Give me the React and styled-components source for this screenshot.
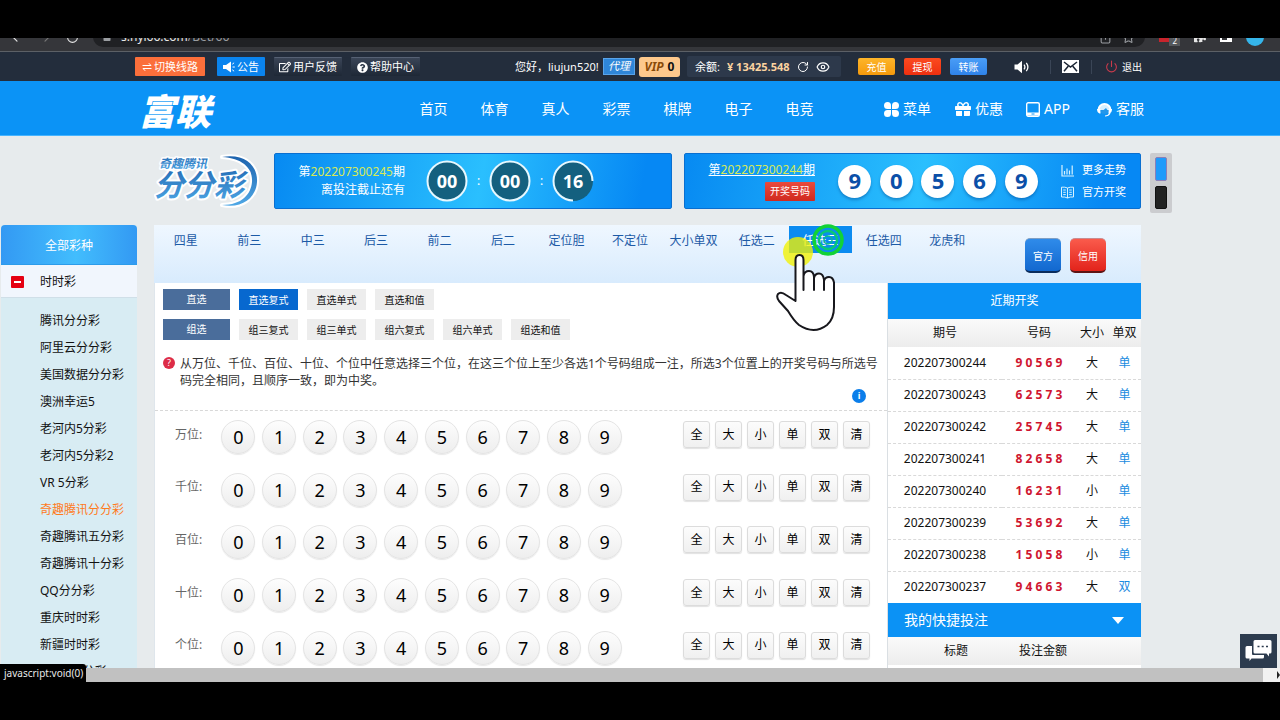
import React, { useState } from 'react'
import styled, { createGlobalStyle } from 'styled-components'
import { FaRegEdit, FaQuestionCircle, FaGift, FaLock, FaPuzzlePiece } from 'react-icons/fa'
import { ArrowLeft, ArrowRight, RotateCw, Eye, Power, Star, Share } from 'lucide-react'

const GlobalStyle = createGlobalStyle`
  * { box-sizing: border-box; }
  body {
    margin: 0;
    background: #000;
    font-family: "Noto Sans", "Noto Sans CJK SC", sans-serif;
    font-size: 12px;
    line-height: 18px;
    color: #111;
  }
  button { font-family: inherit; padding: 0; border: 0; cursor: pointer; }
  a { color: inherit; text-decoration: none; }
  ul { list-style: none; margin: 0; padding: 0; }
  svg { display: block; flex-shrink: 0; }
`;

const Screen = styled.div`
  height: 100vh;
  padding: 38px 0;
  background: #000;
  display: flex;
  flex-direction: column;
  overflow: hidden;
`;

/* browser strip */
const BrowserStrip = styled.div`
  height: 14px;
  flex-shrink: 0;
  display: flex;
  align-items: flex-end;
  overflow: hidden;
  background: #35363a;
  border-bottom: 1px solid #5c6066;
`;

const BrowserBar = styled.div`
  flex: 1;
  height: 28px;
  display: flex;
  align-items: center;
  gap: 14px;
  padding: 0 16px 0 10px;
  color: #e6e6e6;
`;

const Address = styled.div`
  flex: 1;
  height: 20px;
  border-radius: 10px;
  background: #202124;
  display: flex;
  align-items: center;
  gap: 10px;
  padding: 0 10px;
  color: #9a9da1;

  span { flex: 1; }
  b { font-weight: 400; color: #e8e8e8; }
`;

const Extension = styled.div`
  display: flex;
  align-items: center;
`;

const ExtensionBlock = styled.span`
  width: 10px;
  height: 10px;
  background: #c8242c;
`;

const ExtensionCount = styled.span`
  align-self: flex-end;
  margin-top: 8px;
  background: #55585c;
  color: #fff;
  font-size: 8px;
  line-height: 10px;
  padding: 0 3px;
`;

const PanelToggle = styled.span`
  width: 12px;
  height: 10px;
  border: 2px solid #fff;
  border-right-width: 5px;
`;

const Avatar = styled.div`
  width: 18px;
  height: 18px;
  border-radius: 50%;
  background: #35b5ea;
`;

/* account bar */
const AccountBar = styled.div`
  height: 29px;
  flex-shrink: 0;
  display: flex;
  align-items: center;
  gap: 9px;
  padding: 0 138px 0 135px;
  background: #232d3c;
  color: #fff;
  font-size: 11px;
  white-space: nowrap;
`;

const TopButton = styled.button`
  height: 19px;
  width: ${p => p.$w}px;
  display: flex;
  align-items: center;
  justify-content: center;
  gap: 2px;
  border-radius: 1px;
  font-size: 11px;
  line-height: 18px;
  color: #fff;
  background: ${p => p.$bg || 'linear-gradient(#3a4557, #1e2836)'};
  border-top: ${p => p.$bg ? '0' : '1px solid #566174'};
  margin-right: ${p => p.$space || 0}px;
`;

const AccountGroup = styled.div`
  margin-left: auto;
  display: flex;
  align-items: center;
`;

const Greeting = styled.span`
  width: 88px;
`;

const AgentBadge = styled.span`
  width: 32px;
  height: 17px;
  line-height: 14px;
  text-align: center;
  font-style: italic;
  background: #2f86d8;
  border: 1px solid #5aa4ea;
`;

const VipBadge = styled.span`
  width: 41px;
  height: 20px;
  margin: 0 7px 0 4px;
  display: flex;
  align-items: center;
  justify-content: center;
  gap: 4px;
  border-radius: 3px;
  background: #fdc88c;
  font-size: 12px;
  font-weight: 700;
  color: #111;

  i { color: #8a4a08; }
`;

const Balance = styled.div`
  width: 154px;
  height: 21px;
  padding: 0 8px;
  display: flex;
  align-items: center;
  gap: 7px;
  border-radius: 2px;
  background: #2d394b;
  margin-right: 17px;

  b { color: #fbd3a0; }
`;

const CashGroup = styled.div`
  display: flex;
  gap: 9px;
  margin-right: 16px;
`;

const CashButton = styled.button`
  width: 37px;
  height: 17px;
  border-radius: 2px;
  background: ${p => p.$bg};
  color: #fff;
  font-size: 10px;
  line-height: 16px;
`;

const IconCell = styled.button`
  height: 14px;
  display: flex;
  align-items: center;
  padding: 0 ${p => p.$end}px 0 11px;
  background: none;
  border-right: 1px solid #3a4556;
  color: #fff;
`;

const Logout = styled.a`
  display: flex;
  align-items: center;
  gap: 4px;
  padding-left: 13px;
  font-size: 10px;
`;

/* main nav */
const NavBar = styled.nav`
  height: 55px;
  flex-shrink: 0;
  display: flex;
  align-items: center;
  padding: 2px 137px 0 139px;
  background: #0b93f6;
  border-bottom: 1px solid #46b4ff;
  color: #fff;
  font-size: 14px;
`;

const Brand = styled.a`
  font-family: "Noto Sans CJK SC", sans-serif;
  font-size: 36px;
  line-height: 48px;
  font-weight: 900;
  font-style: italic;
`;

const NavLinks = styled.div`
  margin-left: auto;
  margin-right: 54px;
  display: grid;
  grid-template-columns: repeat(7, 61px);
  text-align: center;
`;

const NavTools = styled.div`
  display: flex;
  gap: 25px;
`;

const NavTool = styled.a`
  width: 46px;
  display: flex;
  align-items: center;
  gap: 4px;
  white-space: nowrap;
`;

/* body */
const Body = styled.div`
  position: relative;
  flex: 1;
  min-height: 0;
  overflow: hidden;
  display: flex;
  align-items: flex-start;
  background: #e7ebed;
`;

const Sidebar = styled.aside`
  width: 136px;
  flex-shrink: 0;
  margin: 89px 17px 0 1px;
  background: #d8ecf3;
`;

const SideHead = styled.div`
  height: 40px;
  line-height: 41px;
  text-align: center;
  color: #fff;
  border-radius: 4px 4px 0 0;
  border-bottom: 1px solid #2c9cea;
  background: linear-gradient(90deg, #3399f3, #42bdfd 55%, #3399f3);
`;

const SideGroup = styled.div`
  height: 33px;
  display: flex;
  align-items: center;
  gap: 16px;
  padding: 2px 0 0 10px;
  background: #f1f6fd;
  border-bottom: 1px solid #d0dfe8;
`;

const Minus = styled.button`
  width: 13px;
  height: 12px;
  border-radius: 1px;
  background: #e50012;
  display: flex;
  align-items: center;
  justify-content: center;

  &::before {
    content: '';
    width: 7px;
    height: 2px;
    background: #fff;
  }
`;

const SideList = styled.ul`
  padding-top: 8px;
`;

const SideItem = styled.li`
  height: 27px;
  line-height: 29px;
  padding-left: 39px;
  color: ${p => p.$active ? '#ff7a1c' : '#111'};
`;

const Main = styled.main`
  flex: 1;
  min-width: 0;
  padding-top: 17px;
`;

const BannerRow = styled.div`
  display: grid;
  grid-template-columns: 108px 398fr 457fr;
  gap: 12px;
  height: 56px;
  margin-bottom: 16px;
`;

const Banner = styled.section`
  display: flex;
  align-items: center;
  min-width: 0;
  border: 1px solid #0a6fd0;
  border-radius: 2px;
  background: linear-gradient(100deg, #078af2, #2abffe 52%, #0688f4 92%);
  color: #fff;
`;

const PeriodText = styled.div`
  width: 130px;
  display: flex;
  flex-direction: column;
  align-items: flex-end;
  white-space: nowrap;
  gap: ${p => p.$gap || 0}px;

  em { font-style: normal; color: #d8ea55; }
  a { text-decoration: underline; }
`;

const Clocks = styled.div`
  display: flex;
  align-items: center;
  margin-left: 21px;
`;

const Colon = styled.span`
  width: 21px;
  text-align: center;
  line-height: 20px;
`;

const DrawTag = styled.span`
  width: 50px;
  height: 19px;
  text-align: center;
  font-size: 10px;
  background: linear-gradient(#ea4a3c, #d0291f);
  border-radius: 1px;
`;

const DrawBalls = styled.div`
  width: 208px;
  display: grid;
  grid-template-columns: repeat(5, 1fr);
  justify-items: center;
  margin-left: 19px;
`;

const DrawBall = styled.span`
  width: 33px;
  height: 33px;
  border-radius: 50%;
  background: #fff;
  box-shadow: 0 2px 3px rgba(0, 60, 130, .4);
  color: #0b4fa8;
  font-size: 22px;
  line-height: 31px;
  font-weight: 700;
  text-align: center;
`;

const DrawLinks = styled.div`
  margin-left: 19px;
  display: grid;
  gap: 4px;
  font-size: 11px;

  a { display: flex; align-items: center; gap: 8px; white-space: nowrap; }
`;

const TabBar = styled.div`
  display: flex;
  height: 58px;
  padding-top: 1px;
  background: linear-gradient(#eff7ff, #d8ebfd);
`;

const Tabs = styled.div`
  flex: 1;
  display: grid;
  grid-template-columns: repeat(13, 1fr);
`;

const TabCell = styled.div`
  position: relative;
`;

const Tab = styled.button`
  display: block;
  width: 100%;
  height: 27px;
  padding-top: 2px;
  font-size: 12px;
  line-height: 24px;
  white-space: nowrap;
  color: ${p => p.$active ? '#fff' : '#1c5aa6'};
  background: ${p => p.$active ? '#0b8bf0' : 'none'};
`;

const PointerArt = styled.svg`
  position: absolute;
  z-index: 2;
  left: -16px;
  top: -2px;
  pointer-events: none;
`;

const ModeButtons = styled.div`
  width: 162px;
  display: flex;
  gap: 9px;
  padding: 12px 0 0 46px;
`;

const ModeButton = styled.button`
  width: 36px;
  height: 35px;
  border-radius: 5px;
  color: #fff;
  font-size: 10px;
  background: ${p => p.$red ? 'linear-gradient(#fa5b4c, #e2231b)' : 'linear-gradient(#2f8bea, #1268cf)'};
  border-top: 1px solid ${p => p.$red ? '#c98c90' : '#7f9fc4'};
  border-bottom: 2px solid ${p => p.$red ? '#5c1414' : '#0a2c5c'};
`;

const Columns = styled.div`
  display: flex;
  align-items: flex-start;
`;

const BetPanel = styled.section`
  flex: 1;
  min-width: 0;
  background: #fff;
  border-left: 1px solid #dfe6ec;
`;

const Methods = styled.div`
  display: grid;
  gap: 9px;
  padding: 6px 0 0 8px;
`;

const MethodRow = styled.div`
  display: flex;
  gap: 9px;
`;

const MethodLabel = styled.span`
  width: 67px;
  height: 21px;
  line-height: 21px;
  text-align: center;
  font-size: 10px;
  color: #fff;
  background: #4a6d9b;
`;

const Method = styled.button`
  width: 59px;
  height: 21px;
  font-size: 10px;
  line-height: 20px;
  color: ${p => p.$active ? '#fff' : '#111'};
  background: ${p => p.$active ? '#0768cf' : '#ededed'};
`;

const Hint = styled.div`
  display: flex;
  gap: 5px;
  height: 71px;
  padding: 15px 0 0 8px;
  border-bottom: 1px dashed #d8d8d8;

  p { margin: 0; line-height: 17px; color: #333; }
`;

const HintMark = styled.span`
  width: 12px;
  height: 12px;
  flex-shrink: 0;
  margin-top: 2px;
  border-radius: 50%;
  background: #dd2c47;
  color: #fff;
  font-size: 9px;
  line-height: 12px;
  text-align: center;
`;

const InfoLine = styled.div`
  display: flex;
  justify-content: flex-end;
  margin-right: 21px;
`;

const InfoMark = styled.button`
  width: 14px;
  height: 14px;
  border-radius: 50%;
  background: #0b7eea;
  color: #fff;
  font-size: 9px;
  line-height: 14px;
  font-weight: 700;
`;

const Positions = styled.div`
  display: grid;
  grid-auto-rows: 1fr;
  height: 263px;
`;

const Position = styled.div`
  display: flex;
  align-items: center;
  padding: 0 17px 0 20px;
`;

const PositionName = styled.span`
  width: 43px;
  padding-bottom: 5px;
  color: #666;
`;

const Digits = styled.div`
  width: 407px;
  display: grid;
  grid-template-columns: repeat(10, 1fr);
  justify-items: center;
`;

const Digit = styled.button`
  width: 34px;
  height: 34px;
  border-radius: 50%;
  border: 1px solid #e4e4e4;
  background: linear-gradient(#fdfdfd, #eee);
  box-shadow: 0 1px 1px #e8e8e8;
  font-size: 18px;
  line-height: 32px;
  color: #000;
`;

const Quick = styled.div`
  margin-left: auto;
  padding-bottom: 5px;
  display: flex;
  gap: 5px;
`;

const QuickButton = styled.button`
  width: 27px;
  height: 27px;
  border: 1px solid #dcdcdc;
  border-radius: 3px;
  background: linear-gradient(#fcfcfc, #f0f0f0);
  box-shadow: 0 1px 1px #e2e2e2;
  font-size: 12px;
  line-height: 24px;
  color: #000;
`;

const SidePanel = styled.section`
  width: 254px;
  background: #fff;
  border-left: 1px solid #dadfe3;
`;

const PanelTitle = styled.h2`
  margin: 0;
  height: 36px;
  font-size: 12px;
  line-height: 36px;
  font-weight: 400;
  text-align: center;
  color: #fff;
  background: #0b92f5;
`;

const QuickTitle = styled(PanelTitle)`
  height: 34px;
  display: flex;
  align-items: center;
  justify-content: space-between;
  padding: 0 17px 0 16px;
  font-size: 14px;
`;

const Caret = styled.span`
  border: solid transparent;
  border-width: 7px 6px 0;
  border-top-color: #fff;
`;

const Table = styled.table`
  width: 100%;
  table-layout: fixed;
  border-collapse: collapse;
  text-align: center;

  th, td { padding: 0; white-space: nowrap; }
  th { height: 28px; font-weight: 400; }
  thead { background: linear-gradient(#fafafa, #ececec); }
  tbody td { height: 32px; border-bottom: 1px dashed #d9d9d9; }
  tbody tr:last-child td { border-bottom: 0; }
`;

const Numbers = styled.td`
  color: #cf1530;
  font-weight: 700;
`;

const Parity = styled.td`
  color: #1b8be0;
`;

const Rail = styled.div`
  width: 139px;
  flex-shrink: 0;
  padding: 17px 0 0 9px;
`;

const ThemePicker = styled.div`
  width: 22px;
  height: 60px;
  padding: 4px 5px;
  display: grid;
  gap: 5px;
  border-radius: 2px;
  background: #cbcccf;
`;

const Swatch = styled.button`
  border-radius: 2px;
  border: 1px solid ${p => p.$edge};
  background: ${p => p.$bg};
`;

const ChatButton = styled.button`
  position: absolute;
  right: 3px;
  bottom: 0;
  width: 37px;
  height: 34px;
  display: flex;
  align-items: center;
  justify-content: center;
  background: #2c3b4e;
`;

const ScrollTrack = styled.div`
  position: relative;
  height: 14px;
  flex-shrink: 0;
  display: flex;
  background: #f1f1f1;
`;

const ScrollThumb = styled.div`
  flex: 1;
  margin-right: 14px;
  background: #c1c1c1;
`;

const ScrollArrow = styled.span`
  align-self: center;
  border: solid transparent;
  border-width: 4px 0 4px 3px;
  border-left-color: #222;
`;

const StatusBubble = styled.div`
  position: absolute;
  left: 0;
  bottom: 0;
  height: 18px;
  width: 86px;
  padding-left: 4px;
  border-radius: 0 3px 0 0;
  background: #000;
  color: #e8e8e8;
  font-size: 10px;
  line-height: 19px;
`;

const games = ['腾讯分分彩', '阿里云分分彩', '美国数据分分彩', '澳洲幸运5', '老河内5分彩', '老河内5分彩2', 'VR 5分彩',
  '奇趣腾讯分分彩', '奇趣腾讯五分彩', '奇趣腾讯十分彩', 'QQ分分彩', '重庆时时彩', '新疆时时彩', '老河内1分彩'];
const navLinks = ['首页', '体育', '真人', '彩票', '棋牌', '电子', '电竞'];
const tabs = ['四星', '前三', '中三', '后三', '前二', '后二', '定位胆', '不定位', '大小单双', '任选二', '任选三', '任选四', '龙虎和'];
const methods = [
  { label: '直选', items: ['直选复式', '直选单式', '直选和值'] },
  { label: '组选', items: ['组三复式', '组三单式', '组六复式', '组六单式', '组选和值'] },
];
const positions = ['万位', '千位', '百位', '十位', '个位'];
const quickPicks = ['全', '大', '小', '单', '双', '清'];
const history = [
  ['202207300244', '90569', '大', '单'],
  ['202207300243', '62573', '大', '单'],
  ['202207300242', '25745', '大', '单'],
  ['202207300241', '82658', '大', '单'],
  ['202207300240', '16231', '小', '单'],
  ['202207300239', '53692', '大', '单'],
  ['202207300238', '15058', '小', '单'],
  ['202207300237', '94663', '大', '双'],
];

const SwapIcon = () => (
  <svg width="10" height="10" viewBox="0 0 10 10" fill="none" stroke="#fff" strokeWidth="1">
    <path d="M0.5 3.5H9L6.8 1.2M9.5 6.5H1L3.2 8.8" />
  </svg>
)

const HornIcon = () => (
  <svg width="12" height="12" viewBox="0 0 12 12" fill="#fff">
    <path d="M0 4h3l5-3.5v11L3 8H0z" />
    <path d="M9.3 3.2l1.8-1.4M9.5 6h2.3M9.3 8.8l1.8 1.4" stroke="#fff" strokeWidth="1" />
  </svg>
)

const SpeakerIcon = () => (
  <svg width="16" height="14" viewBox="0 0 16 14" fill="none" stroke="#fff" strokeWidth="1.3">
    <path d="M0.5 4.5h3L8 0.8v12.4L3.5 9.5h-3z" fill="#fff" stroke="none" />
    <path d="M10 4.6q1.8 2.4 0 4.8M12.3 2.8q3.2 4.2 0 8.4" />
  </svg>
)

const MailIcon = () => (
  <svg width="17" height="13" viewBox="0 0 17 13">
    <rect width="17" height="13" fill="#fff" />
    <path d="M2 2l6.5 5L15 2M2 11.2l4.2-5M15 11.2l-4.2-5" fill="none" stroke="#1b2433" strokeWidth="1.5" />
  </svg>
)

const MenuIcon = () => (
  <svg width="15" height="15" viewBox="0 0 15 15" fill="#fff">
    <path d="M3.5 0A3.5 3.5 0 0 1 7 3.5V7H3.5a3.5 3.5 0 0 1 0-7z" />
    <path d="M11.5 0A3.5 3.5 0 0 0 8 3.5V7h3.5a3.5 3.5 0 0 0 0-7z" />
    <path d="M3.5 15A3.5 3.5 0 0 0 7 11.5V8H3.5a3.5 3.5 0 0 0 0 7z" />
    <path d="M11.5 15A3.5 3.5 0 0 1 8 11.5V8h3.5a3.5 3.5 0 0 1 0 7z" />
  </svg>
)

const TabletIcon = () => (
  <svg width="14" height="15" viewBox="0 0 14 15" fill="none" stroke="#fff" strokeWidth="1.4">
    <rect x="0.7" y="0.7" width="12.6" height="13.6" rx="1.5" />
    <path d="M1 12h12" strokeWidth="3" />
    <path d="M5.5 12h3" stroke="#0b93f6" strokeWidth="1" />
  </svg>
)

const ServiceIcon = () => (
  <svg width="15" height="15" viewBox="0 0 15 15">
    <path d="M1.5 8A6 6 0 0 1 13.5 8" fill="#d7efff" stroke="#fff" strokeWidth="2" />
    <path d="M0 7h3.5v4.5H2.5Q0 10.5 0 7zM15 7h-3.5v4.5h1Q15 10.5 15 7z" fill="#fff" />
    <path d="M3.5 8.5q3.5 0 5.5-2.5 1 2 2.5 2.5Q11 12 7.5 12T3.5 8.5z" fill="#2497ea" />
    <path d="M13 11q-1.5 3-5 3" fill="none" stroke="#fff" strokeWidth="1.2" />
  </svg>
)

const TrendIcon = () => (
  <svg width="13" height="13" viewBox="0 0 13 13" fill="none" stroke="#d8f2ff" strokeWidth="1.2">
    <path d="M1 1v11h12M3.5 10.5V7M6 10.5V4.5M8.5 10.5V6.5M11.2 10.5V1.5" />
  </svg>
)

const BookIcon = () => (
  <svg width="13" height="13" viewBox="0 0 13 13" fill="none" stroke="#d8f2ff" strokeWidth="1">
    <path d="M6.5 2Q4 0.8 0.5 1.2V11Q4 10.6 6.5 12 9 10.6 12.5 11V1.2Q9 0.8 6.5 2zV12M2.2 4h2.6M2.2 6.3h2.6M2.2 8.6h2.6M8.2 4h2.6M8.2 6.3h2.6M8.2 8.6h2.6" />
  </svg>
)

const ChatIcon = () => (
  <svg width="27" height="24" viewBox="0 0 27 24" fill="#fff">
    <path d="M2 7h5v8q0 1 1 1h11v2q0 1.5-1.5 1.5H6.5L4.5 22v-2.5H2Q0.5 19.5 0.5 18V8.5Q0.5 7 2 7z" />
    <path d="M10 1h15q1.5 0 1.5 1.5v10.5q0 1.5-1.5 1.5h-1V17.5L21.5 14.5H10q-1.5 0-1.5-1.5V2.5Q8.5 1 10 1z" />
    <path d="M12.5 7.5h2M16.7 7.5h2M21 7.5h2" stroke="#2c3b4e" strokeWidth="1.5" />
  </svg>
)

const LotteryLogo = () => (
  <svg width="108" height="56" viewBox="0 0 108 56">
    <defs>
      <linearGradient id="logoBlue" x1="0" y1="0" x2="0" y2="1">
        <stop offset="0" stopColor="#1d63ae" />
        <stop offset="1" stopColor="#4fa8e6" />
      </linearGradient>
    </defs>
    <g fill="url(#logoBlue)" stroke="#fff" strokeWidth="4" paintOrder="stroke" strokeLinejoin="round" fontStyle="italic"
      fontFamily='"Noto Sans CJK SC", sans-serif'>
      <path d="M68 4C92 0 104 14 103 29C102 45 88 56 68 52C88 52 97 41 98 29C99 15 88 5 68 4z" />
      <text x="5" y="15" fontSize="12" fontWeight="700" strokeWidth="3">奇趣腾讯</text>
      <text x="0" y="43" fontSize="30" fontWeight="700">分分彩</text>
    </g>
  </svg>
)

// the running clock leaves the elapsed quarter of its ring dark
function Clock({ value, running }) {
  return (
    <svg width="42" height="42" viewBox="0 0 42 42">
      <circle cx="21" cy="21" r="20" fill="#14607f" />
      <circle cx="21" cy="21" r="19.5" fill="none" stroke="#e6f8ff" strokeWidth="2"
        pathLength="100" strokeDasharray={running ? '75 25' : 'none'} strokeDashoffset={running ? -25 : 0} />
      <text x="21" y="28" textAnchor="middle" fill="#fff" fontSize="18" fontWeight="700">{value}</text>
    </svg>
  )
}

const HandPointer = () => (
  <PointerArt width="81" height="108" viewBox="0 0 81 108">
    <circle cx="55" cy="16" r="14" fill="none" stroke="#12d236" strokeWidth="3.5" />
    <circle cx="55" cy="16" r="9" fill="none" stroke="#08c877" strokeWidth="2.5" />
    <circle cx="55" cy="16" r="4" fill="none" stroke="#0cbf88" strokeWidth="1.5" />
    <circle cx="25" cy="28" r="15" fill="#f2f200" fillOpacity="0.78" />
    <path
      d="M22.5 77V36q0-5 4-5t4 5V66V52q1-5 5.5-5t5 6V66V54q1-4.5 5-4.5t5 6V66V57q1-4 5-4t5 5.5V83q0 12-7 18-13 10-28 0-5-4-11-14l-9-10q-3-4-1-7 3-3 8 1z"
      fill="#fff" stroke="#17171c" strokeWidth="2" strokeLinejoin="round"
    />
  </PointerArt>
)

const App = () => {

  const [tab, setTab] = useState('任选三');
  const [method, setMethod] = useState('直选复式');

  return (
    <>
      <GlobalStyle />
      <Screen>
        <BrowserStrip>
          <BrowserBar>
            <ArrowLeft size={14} />
            <ArrowRight size={14} color="#777" />
            <RotateCw size={13} />
            <Address>
              <FaLock size={8} />
              <span><b>s.hyl66.com</b>/Bet/66</span>
              <Share size={13} />
              <Star size={13} />
            </Address>
            <Extension><ExtensionBlock /><ExtensionCount>2</ExtensionCount></Extension>
            <FaPuzzlePiece size={12} />
            <PanelToggle />
            <Avatar />
          </BrowserBar>
        </BrowserStrip>

        <AccountBar>
          <TopButton $w={70} $bg="#fb6f3b" $space={3}><SwapIcon />切换线路</TopButton>
          <TopButton $w={48} $bg="#0a84ee"><HornIcon />公告</TopButton>
          <TopButton $w={68}><FaRegEdit size={12} />用户反馈</TopButton>
          <TopButton $w={69}><FaQuestionCircle size={11} />帮助中心</TopButton>
          <AccountGroup>
            <Greeting>您好，liujun520!</Greeting>
            <AgentBadge>代理</AgentBadge>
            <VipBadge><i>VIP</i>0</VipBadge>
            <Balance>
              <span>余额:</span>
              <b>¥ 13425.548</b>
              <RotateCw size={12} />
              <Eye size={14} />
            </Balance>
            <CashGroup>
              <CashButton $bg="linear-gradient(#fdb52a, #f59a0c)">充值</CashButton>
              <CashButton $bg="linear-gradient(#fb4a20, #ee3010)">提现</CashButton>
              <CashButton $bg="linear-gradient(#4a9df6, #2f83ea)">转账</CashButton>
            </CashGroup>
            <IconCell $end={20} aria-label="声音"><SpeakerIcon /></IconCell>
            <IconCell $end={12} aria-label="消息"><MailIcon /></IconCell>
            <Logout href="#"><Power size={13} color="#c93a4c" />退出</Logout>
          </AccountGroup>
        </AccountBar>

        <NavBar>
          <Brand href="#">富联</Brand>
          <NavLinks>
            {navLinks.map((name) => <a key={name} href="#">{name}</a>)}
          </NavLinks>
          <NavTools>
            <NavTool href="#"><MenuIcon />菜单</NavTool>
            <NavTool href="#"><FaGift size={16} />优惠</NavTool>
            <NavTool href="#"><TabletIcon />APP</NavTool>
            <NavTool href="#"><ServiceIcon />客服</NavTool>
          </NavTools>
        </NavBar>

        <Body>
          <Sidebar>
            <SideHead>全部彩种</SideHead>
            <SideGroup><Minus aria-label="收起" />时时彩</SideGroup>
            <SideList>
              {games.map((name) => (
                <SideItem key={name} $active={name === '奇趣腾讯分分彩'}><a href="#">{name}</a></SideItem>
              ))}
            </SideList>
          </Sidebar>

          <Main>
            <BannerRow>
              <LotteryLogo />
              <Banner>
                <PeriodText>
                  <span>第<em>202207300245</em>期</span>
                  <span>离投注截止还有</span>
                </PeriodText>
                <Clocks>
                  <Clock value="00" />
                  <Colon>:</Colon>
                  <Clock value="00" />
                  <Colon>:</Colon>
                  <Clock value="16" running />
                </Clocks>
              </Banner>
              <Banner>
                <PeriodText $gap={3}>
                  <a href="#">第<em>202207300244</em>期</a>
                  <DrawTag>开奖号码</DrawTag>
                </PeriodText>
                <DrawBalls>
                  {[9, 0, 5, 6, 9].map((n, i) => <DrawBall key={i}>{n}</DrawBall>)}
                </DrawBalls>
                <DrawLinks>
                  <a href="#"><TrendIcon />更多走势</a>
                  <a href="#"><BookIcon />官方开奖</a>
                </DrawLinks>
              </Banner>
            </BannerRow>

            <TabBar>
              <Tabs>
                {tabs.map((name) => (
                  <TabCell key={name}>
                    <Tab $active={tab === name} onClick={() => setTab(name)}>{name}</Tab>
                    {name === '任选三' && <HandPointer />}
                  </TabCell>
                ))}
              </Tabs>
              <ModeButtons>
                <ModeButton>官方</ModeButton>
                <ModeButton $red>信用</ModeButton>
              </ModeButtons>
            </TabBar>

            <Columns>
              <BetPanel>
                <Methods>
                  {methods.map((row) => (
                    <MethodRow key={row.label}>
                      <MethodLabel>{row.label}</MethodLabel>
                      {row.items.map((name) => (
                        <Method key={name} $active={method === name} onClick={() => setMethod(name)}>{name}</Method>
                      ))}
                    </MethodRow>
                  ))}
                </Methods>
                <Hint>
                  <HintMark>?</HintMark>
                  <div>
                    <p>从万位、千位、百位、十位、个位中任意选择三个位，在这三个位上至少各选1个号码组成一注，所选3个位置上的开奖号码与所选号码完全相同，且顺序一致，即为中奖。</p>
                    <InfoLine><InfoMark>i</InfoMark></InfoLine>
                  </div>
                </Hint>
                <Positions>
                  {positions.map((name) => (
                    <Position key={name}>
                      <PositionName>{name}:</PositionName>
                      <Digits>
                        {[0, 1, 2, 3, 4, 5, 6, 7, 8, 9].map((n) => <Digit key={n}>{n}</Digit>)}
                      </Digits>
                      <Quick>
                        {quickPicks.map((q) => <QuickButton key={q}>{q}</QuickButton>)}
                      </Quick>
                    </Position>
                  ))}
                </Positions>
              </BetPanel>

              <SidePanel>
                <PanelTitle>近期开奖</PanelTitle>
                <Table>
                  <colgroup>
                    <col />
                    <col width="74" />
                    <col width="32" />
                    <col width="33" />
                  </colgroup>
                  <thead>
                    <tr><th>期号</th><th>号码</th><th>大小</th><th>单双</th></tr>
                  </thead>
                  <tbody>
                    {history.map(([period, nums, size, parity]) => (
                      <tr key={period}>
                        <td>{period}</td>
                        <Numbers>{nums.split('').join(' ')}</Numbers>
                        <td>{size}</td>
                        <Parity>{parity}</Parity>
                      </tr>
                    ))}
                  </tbody>
                </Table>
                <QuickTitle>我的快捷投注<Caret /></QuickTitle>
                <Table>
                  <colgroup>
                    <col width="24" />
                    <col />
                    <col width="86" />
                    <col width="55" />
                  </colgroup>
                  <thead>
                    <tr><th /><th>标题</th><th>投注金额</th><th /></tr>
                  </thead>
                  <tbody>
                    <tr><td colSpan={4} /></tr>
                  </tbody>
                </Table>
              </SidePanel>
            </Columns>
          </Main>

          <Rail>
            <ThemePicker>
              <Swatch $bg="#1f9bfa" $edge="#8a7fb8" aria-label="蓝色" />
              <Swatch $bg="#222" $edge="#111" aria-label="黑色" />
            </ThemePicker>
          </Rail>
          <ChatButton aria-label="客服"><ChatIcon /></ChatButton>
        </Body>

        <ScrollTrack>
          <ScrollThumb />
          <ScrollArrow />
          <StatusBubble>javascript:void(0)</StatusBubble>
        </ScrollTrack>
      </Screen>
    </>
  )
}

export default App
